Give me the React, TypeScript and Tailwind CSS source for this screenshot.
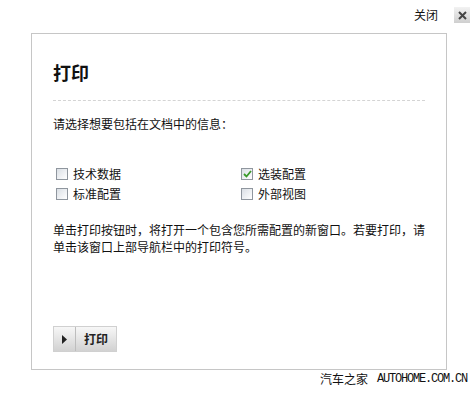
import React from "react";

const cjk = { fontFamily: '"Noto Sans CJK SC", "Noto Sans", sans-serif' };

function Box({ checked, label }: { checked?: boolean; label: string }) {
  return (
    <label className="flex h-[20px] items-center gap-[5px] text-[12px] text-[#111]">
      <span className="flex h-[12px] w-[12px] items-center justify-center border border-[#8f969e] bg-gradient-to-br from-[#dadfe5] to-[#ffffff]">
        {checked && (
          <svg width="9" height="8" viewBox="0 0 9 8">
            <path d="M1 4 L3.5 6.5 L8 1" fill="none" stroke="#3a9a2a" strokeWidth="1.8" />
          </svg>
        )}
      </span>
      <span className="leading-none">{label}</span>
    </label>
  );
}

export default function App() {
  return (
    <div className="relative h-[397px] w-[473px] overflow-hidden bg-white" style={cjk}>
      {/* close */}
      <div className="flex h-[33px] items-center justify-end gap-[16px] pr-[3px] pb-[3px]">
        <span className="text-[12px] text-[#111]">关闭</span>
        <span className="flex h-[16px] w-[16px] items-center justify-center bg-gradient-to-b from-[#f2f2f2] to-[#cfcfcf]">
          <svg width="9" height="9" viewBox="0 0 9 9">
            <path d="M1 1 L8 8 M8 1 L1 8" stroke="#444" strokeWidth="2" />
          </svg>
        </span>
      </div>

      {/* panel */}
      <div className="ml-[31px] h-[337px] w-[416px] border border-[#c6c6c6] px-[21px]">
        <h1 className="mt-[26px] text-[18px] font-bold leading-[24px] text-[#111]">打印</h1>
        <div className="mt-[16px] border-t border-dashed border-[#d4d4d4]" />

        <p className="mt-[15px] text-[12px] leading-[16px] text-[#111]">请选择想要包括在文档中的信息：</p>

        <div className="mt-[32px] grid grid-cols-[185px_1fr] pl-[3px]">
          <Box label="技术数据" />
          <Box checked label="选装配置" />
          <Box label="标准配置" />
          <Box label="外部视图" />
        </div>

        <p className="mt-[17px] text-[12px] leading-[17px] text-[#111]">
          单击打印按钮时，将打开一个包含您所需配置的新窗口。若要打印，请单击该窗口上部导航栏中的打印符号。
        </p>

        <button className="mt-[71px] flex h-[26px] items-stretch border border-[#d0d0d0] bg-gradient-to-b from-[#f7f7f7] to-[#d2d2d2]">
          <span className="flex w-[22px] items-center justify-center border-r border-[#bdbdbd]">
            <svg width="5" height="9" viewBox="0 0 5 9">
              <path d="M0 0 L5 4.5 L0 9 Z" fill="#222" />
            </svg>
          </span>
          <span className="flex items-center px-[8px] text-[12px] font-bold text-[#222]">打印</span>
        </button>
      </div>

      {/* footer */}
      <div className="flex items-center justify-end gap-[9px] pr-[6px] text-[#111]">
        <span className="text-[12px]">汽车之家</span>
        <span
          className="text-[12px] tracking-[-1.2px]"
          style={{ fontFamily: '"Liberation Mono", monospace' }}
        >
          AUTOHOME.COM.CN
        </span>
      </div>
    </div>
  );
}
